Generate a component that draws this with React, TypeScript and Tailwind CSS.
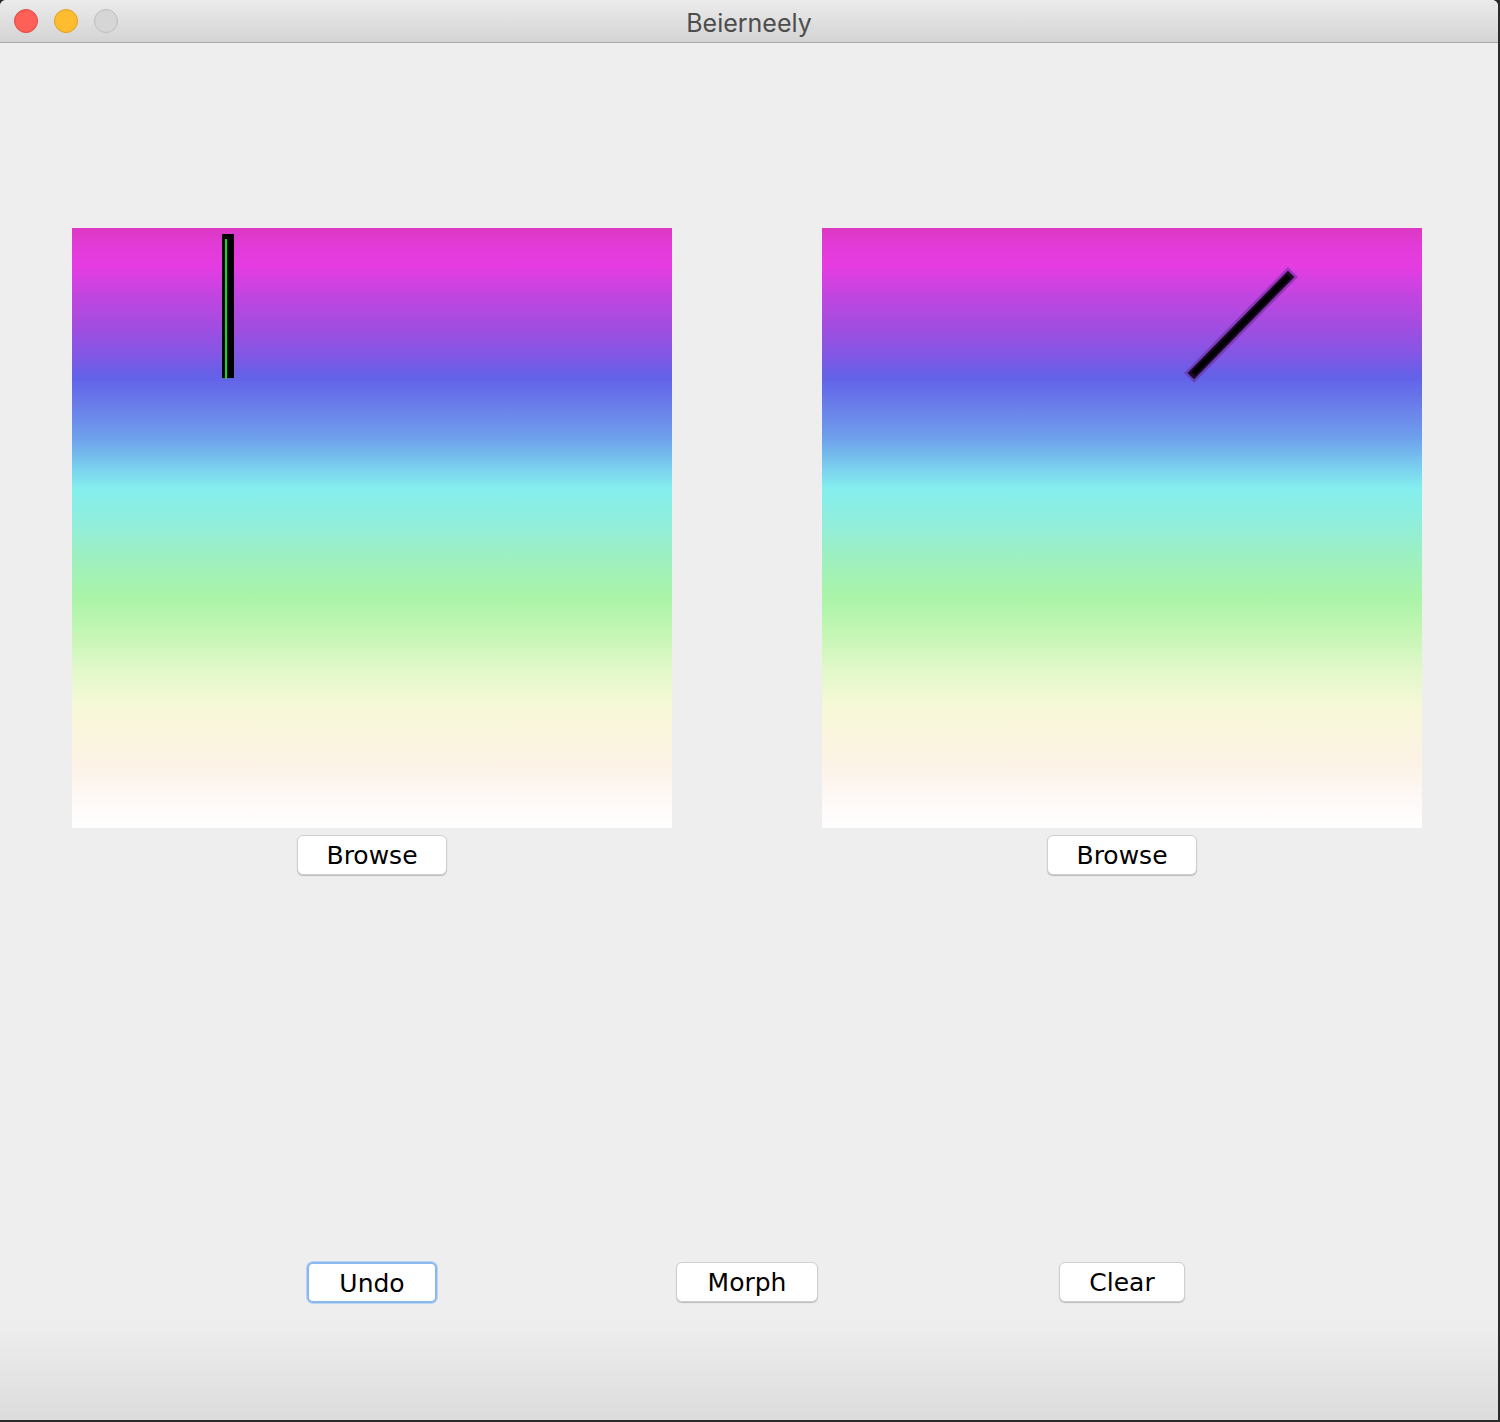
import React from "react";

const gradient =
  "linear-gradient(to bottom, #dd38c2 0px, #e23bd8 18px, #e63ce2 37px, #c444e0 65px, #a64ce0 95px, #8456e4 125px, #6262e8 150px, #6a80ea 180px, #6ea0ec 210px, #78c8ee 235px, #84eeee 260px, #92eed8 300px, #9ef0c0 330px, #aaf4a8 370px, #c4f6b4 405px, #e0f8c8 440px, #f8f8d8 482px, #fbf2e4 533px, #fef8f6 570px, #ffffff 600px)";

function MacButton({
  label,
  width,
  focused,
}: {
  label: string;
  width: string;
  focused?: boolean;
}) {
  return (
    <button
      className={
        focused
          ? `${width} h-[41px] rounded-[6px] bg-white border-[2px] border-[#8ab8ee] shadow-[0_0_0_1px_#b9d5f5] text-[25px] text-black leading-none flex items-center justify-center`
          : `${width} h-[40px] rounded-[6px] bg-white border border-[#cfcfcf] shadow-[0_1px_1px_rgba(0,0,0,0.22)] text-[25px] text-black leading-none flex items-center justify-center`
      }
      style={{ fontFamily: '"DejaVu Sans", "Open Sans", sans-serif' }}
    >
      <span className="mt-[1px]">{label}</span>
    </button>
  );
}

function Canvas({ children }: { children?: React.ReactNode }) {
  return (
    <div className="relative w-[600px] h-[600px]" style={{ background: gradient }}>
      {children}
    </div>
  );
}

export default function App() {
  return (
    <div className="w-[1500px] h-[1422px] bg-[#2b2b2b] overflow-hidden">
      <div className="w-[1498px] h-[1420px] bg-[#eeeeee] rounded-t-[6px] overflow-hidden flex flex-col">
        {/* Title bar */}
        <div className="relative h-[43px] shrink-0 bg-gradient-to-b from-[#ebebeb] to-[#d4d4d4] border-b border-[#a9a9a9] flex items-center justify-center">
          <div className="absolute left-[14px] top-[9px] flex gap-[16px]">
            <div className="w-[24px] h-[24px] rounded-full bg-[#fe5f57] border border-[#e2463f]" />
            <div className="w-[24px] h-[24px] rounded-full bg-[#febc2e] border border-[#dfa023]" />
            <div className="w-[24px] h-[24px] rounded-full bg-[#d6d6d6] border border-[#bdbdbd]" />
          </div>
          <span
            className="text-[25px] text-[#4d4d4d] mt-[5px]"
            style={{ fontFamily: 'Inter, "Noto Sans", sans-serif' }}
          >
            Beierneely
          </span>
        </div>

        {/* Content */}
        <div className="flex-1 flex flex-col bg-gradient-to-b from-[#eeeeee] via-[#eeeeee] via-[93%] to-[#dcdcdc]">
          <div className="pt-[185px] pl-[72px] grid grid-cols-[600px_150px_600px]">
            <div className="flex flex-col items-center">
              <Canvas>
                <div className="absolute left-[150px] top-[6px] w-[12px] h-[144px] bg-black">
                  <div className="absolute left-[3px] top-[5px] w-[2px] h-[140px] bg-[#00e31a]" />
                </div>
              </Canvas>
              <div className="mt-[7px]">
                <MacButton label="Browse" width="w-[150px]" />
              </div>
            </div>
            <div />
            <div className="flex flex-col items-center">
              <Canvas>
                <svg className="absolute left-0 top-0" width="600" height="600" viewBox="0 0 600 600">
                  <line x1="372" y1="145" x2="466" y2="49" stroke="#6a2a9a" strokeOpacity="0.55" strokeWidth="14" strokeLinecap="square" />
                  <line x1="372" y1="145" x2="466" y2="49" stroke="#1c0a28" strokeWidth="9" strokeLinecap="square" />
                  <line x1="373" y1="144" x2="465" y2="50" stroke="#000000" strokeWidth="5" strokeLinecap="square" />
                </svg>
              </Canvas>
              <div className="mt-[7px]">
                <MacButton label="Browse" width="w-[150px]" />
              </div>
            </div>
          </div>

          <div className="mt-[387px] pl-[72px] grid grid-cols-[600px_150px_600px]">
            <div className="flex justify-center">
              <MacButton label="Undo" width="w-[130px]" focused />
            </div>
            <div className="flex justify-center">
              <MacButton label="Morph" width="w-[142px]" />
            </div>
            <div className="flex justify-center">
              <MacButton label="Clear" width="w-[126px]" />
            </div>
          </div>
        </div>
      </div>
    </div>
  );
}
